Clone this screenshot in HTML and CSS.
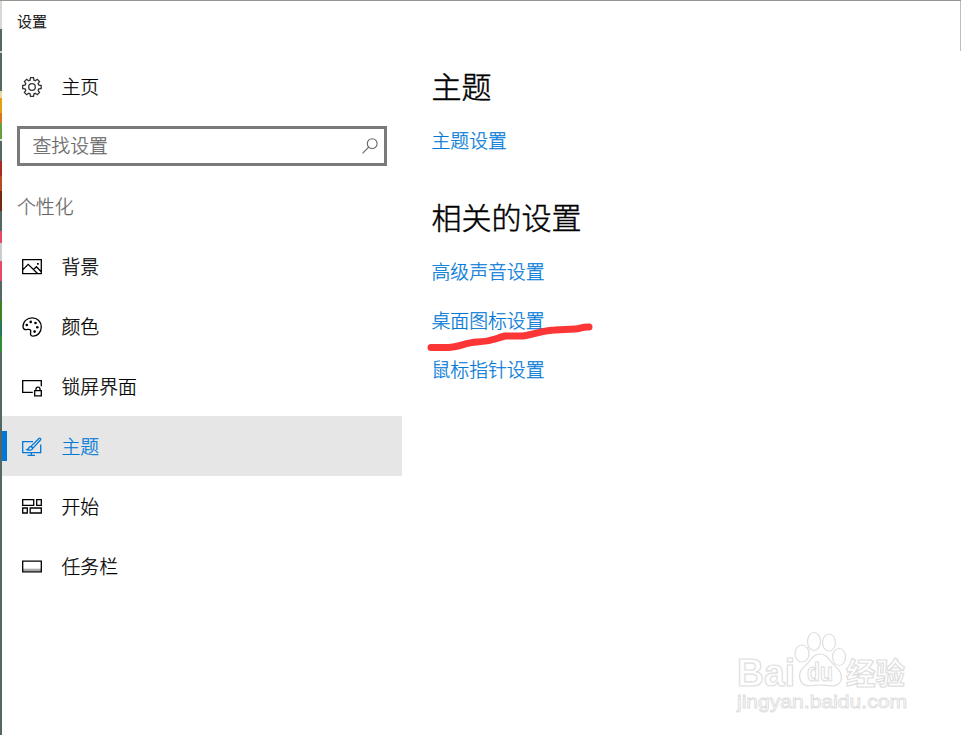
FILE: index.html
```html
<!DOCTYPE html>
<html lang="zh-CN">
<head>
<meta charset="utf-8">
<title>设置</title>
<link rel="stylesheet" href="styles.css">
</head>
<body>
<div class="window">
  <header class="titlebar">设置</header>
  <div class="columns">
    <aside class="sidebar">
      <a class="item home">
        <svg class="icon gear" viewBox="0 0 20 20"><path d="M8 3.200 8.500.7h3L12 3.200l1.200.5 2.100-1.400 2.200 2.200-1.400 2.100.5 1.300 2.600.6v3l-2.600.6-.5 1.300 1.400 2.100-2.200 2.200-2.100-1.400-1.200.5-.5 2.500h-3L8 16.800l-1.300-.5-2.100 1.400-2.200-2.200 1.400-2.100-.5-1.300-2.600-.6v-3l2.600-.6.5-1.300-1.400-2.100 2.200-2.200 2.100 1.400z"/><circle cx="10" cy="10" r="3.300"/></svg>
        <span>主页</span>
      </a>
      <div class="search">
        <span>查找设置</span>
        <svg class="lens" viewBox="0 0 16 16"><circle cx="10.200" cy="5.600" r="4.900"/><path d="M6.700 9.200.5 15.400"/></svg>
      </div>
      <h2 class="group">个性化</h2>
      <nav>
        <a class="item">
          <svg class="icon" viewBox="0 0 20 20"><path d="M.7 2.700h18.600v14H.7zM1 12.600l5.200-5.300 9.300 9.200M11.700 12.400l2.700-2.700 4.800 5"/><path class="solid" d="M15 6h1.700v1.700H15z"/></svg>
          <span>背景</span>
        </a>
        <a class="item">
          <svg class="icon" viewBox="0 0 20 20"><path d="M1 9.800C.8 4.600 5 .8 10.200.8c5.200 0 9.100 4 9.100 9 0 5.300-3.700 9.400-8 9.400-2.100 0-2.900-1.200-2.800-2.700.1-1.500.7-2.500-.1-3.500-.9-1.100-2.300-.5-3.700-.4C2.600 12.800 1.100 12 1 9.800z"/><g class="solid"><circle cx="4.800" cy="8" r="1.300"/><circle cx="8.700" cy="4.900" r="1.300"/><circle cx="13.500" cy="6" r="1.300"/><circle cx="15.300" cy="10.300" r="1.300"/><circle cx="12.600" cy="14.600" r="1.300"/></g></svg>
          <span>颜色</span>
        </a>
        <a class="item">
          <svg class="icon" viewBox="0 0 20 20"><path d="M10.800 15.300H.7V3.700h18.600v5.500M12.700 13.600h6.600v5.200h-6.600zM14 13.400v-1.500c0-2.500 4-2.500 4 0v1.500"/></svg>
          <span>锁屏界面</span>
        </a>
        <a class="item active">
          <svg class="icon" viewBox="0 0 20 20"><path d="M11 4.600H.7v11h18V7.500M5.500 18.300h7.500M9.300 15.500v2.800"/><path d="m9.200 9.100 7.700-7.600c1-.9 2.400.3 1.500 1.500L11 11.100zM8.800 9.400c-2.200.1-1.600 2.600-3.800 3.300 2 .9 5.500.7 5.800-1.500z"/></svg>
          <span>主题</span>
        </a>
        <a class="item">
          <svg class="icon" viewBox="0 0 20 20"><path d="M.7 2.700h11v5.600H.7zM14.700 2.700h4.600v5.600h-4.600zM.7 11h4.600v5H.7zM8.200 11h11.100v5H8.200z"/></svg>
          <span>开始</span>
        </a>
        <a class="item">
          <svg class="icon" viewBox="0 0 20 20"><path class="shade" d="M1 11.700h18v2.500H1z"/><path d="M.7 4.200h18.600v10.600H.7z"/></svg>
          <span>任务栏</span>
        </a>
      </nav>
    </aside>
    <main class="content">
      <h1>主题</h1>
      <a class="link">主题设置</a>
      <h1 class="related">相关的设置</h1>
      <a class="link">高级声音设置</a>
      <a class="link">桌面图标设置</a>
      <a class="link">鼠标指针设置</a>
    </main>
  </div>
  <svg class="marker" viewBox="0 0 170 30"><path d="M5 24.500h17c11 0 17-5 29-5.500 14 0 17-3 28-6h18c13-2 22-6 32-6l20-1c6 0 7-2.500 14-2h-1"/></svg>
  <svg class="watermark" viewBox="0 0 180 90">
    <text class="brand" x="3" y="58" textLength="58" lengthAdjust="spacingAndGlyphs">Bai</text>
    <g class="paw"><ellipse cx="68" cy="25.500" rx="7" ry="8.500"/><ellipse cx="80" cy="13.500" rx="6.500" ry="9"/><ellipse cx="95" cy="14.500" rx="6.500" ry="8.500"/><ellipse cx="105" cy="29" rx="6.500" ry="8.500"/><path d="M86 26c-7 0-9 6-13 10-5 5-9 8-7 15 3 10 12 6 20 6s18 4 21-5c2-7-3-11-8-16-4-4-6-10-13-10z"/></g>
    <text class="du" x="73" y="53" textLength="26" lengthAdjust="spacingAndGlyphs">du</text>
    <text class="cn" x="112" y="56" textLength="59" lengthAdjust="spacingAndGlyphs">经验</text>
    <text class="url" x="3" y="80" textLength="170" lengthAdjust="spacingAndGlyphs">jingyan.baidu.com</text>
  </svg>
</div>
</body>
</html>
```
FILE: styles.css
```css
* { box-sizing: border-box; }
body {
  margin: 0;
  background: #fff;
  color: #000;
  font-family: "Noto Sans CJK SC", sans-serif;
  font-weight: 300;
  font-size: 18.85px;
  -webkit-text-stroke: 0.25px currentColor;
}
.window {
  position: relative;
  height: 735px;
  overflow: hidden;
  border-top: 1px solid #969690;
  padding-left: 2px;
}
.window::before {
  content: "";
  position: absolute;
  left: 0;
  top: 0;
  width: 2px;
  height: 735px;
  background: linear-gradient(#d8d8d4 0 28px, #536865 28px 50px, #c9cfcd 50px 52px, #536865 52px 90px, #ead9a4 90px 97px, #e0a010 97px 112px, #d87520 112px 122px, #65a040 122px 138px, #d9e4dc 138px 140px, #536865 140px 160px, #a82a20 160px 175px, #b54a25 175px 190px, #742810 190px 210px, #536865 210px 230px, #e84868 230px 242px, #ccc 242px 260px, #e84868 260px 280px, #536865 280px 300px, #408028 300px 320px, #287858 320px 335px, #308c30 335px 351px, #536865 351px);
}
.window::after {
  content: "";
  position: absolute;
  right: 0;
  top: 0;
  width: 1px;
  height: 50px;
  background: #bdbdbd;
}
.titlebar {
  height: 55px;
  padding: 9px 0 0 15px;
  font-size: 15px;
  line-height: 22px;
}
.columns { display: flex; }
.sidebar { width: 400px; }
.item {
  display: flex;
  align-items: center;
  height: 60px;
  padding-left: 20px;
  gap: 19.5px;
}
.item span { padding-bottom: 1px; }
.icon {
  width: 20px;
  height: 20px;
  margin-top: 2px;
  fill: none;
  stroke: currentColor;
  stroke-width: 1.3;
}
.gear { stroke: #333; }
.icon .solid { fill: currentColor; stroke: none; }
.icon .shade { fill: #aaa; stroke: none; }
.search {
  display: flex;
  align-items: center;
  justify-content: space-between;
  width: 370px;
  height: 40px;
  margin: 10px 0 0 15px;
  padding: 0 6px 4px 12.5px;
  border: 3px solid #7a7a7a;
  color: #666;
}
.lens {
  width: 16px;
  height: 16px;
  margin-top: 4px;
  fill: none;
  stroke: #666;
  stroke-width: 1.1;
}
.group {
  height: 70px;
  margin: 0;
  padding: 26px 0 0 15px;
  font-size: 18.85px;
  font-weight: 300;
  line-height: 28px;
  color: #666;
}
.active {
  position: relative;
  background: #e6e6e6;
  color: #0078d7;
}
.active::before {
  content: "";
  position: absolute;
  left: 0;
  top: 15px;
  width: 5px;
  height: 30px;
  background: #0078d7;
}
.content {
  display: flex;
  flex-direction: column;
  padding: 7px 0 0 29.5px;
}
.content h1 {
  margin: 0;
  font-size: 30px;
  font-weight: 300;
  line-height: 44px;
  -webkit-text-stroke-width: 0.45px;
}
.content .related { margin-top: 38px; }
.link {
  height: 49px;
  padding-top: 19px;
  line-height: 28px;
  color: #0078d7;
}
.marker {
  position: absolute;
  left: 426px;
  top: 322px;
  width: 170px;
  height: 30px;
  fill: none;
  stroke: #fc3636;
  stroke-width: 7;
  stroke-linecap: round;
  stroke-linejoin: round;
}
.watermark {
  position: absolute;
  left: 734px;
  top: 627px;
  width: 180px;
  height: 90px;
  fill: #fff;
  stroke: #dedede;
  stroke-width: 1.2;
  -webkit-text-stroke: 0;
}
.watermark text { stroke: #dedede; stroke-width: 1.2; }
.brand { font: 700 39px/1 "Liberation Sans", sans-serif; }
.du { font: 700 26px/1 "Liberation Sans", sans-serif; }
.cn { font: 700 30px/1 "Noto Sans CJK SC", sans-serif; }
.watermark .url { font: 400 19px/1 "Liberation Sans", sans-serif; stroke-width: 0.9; }
```
